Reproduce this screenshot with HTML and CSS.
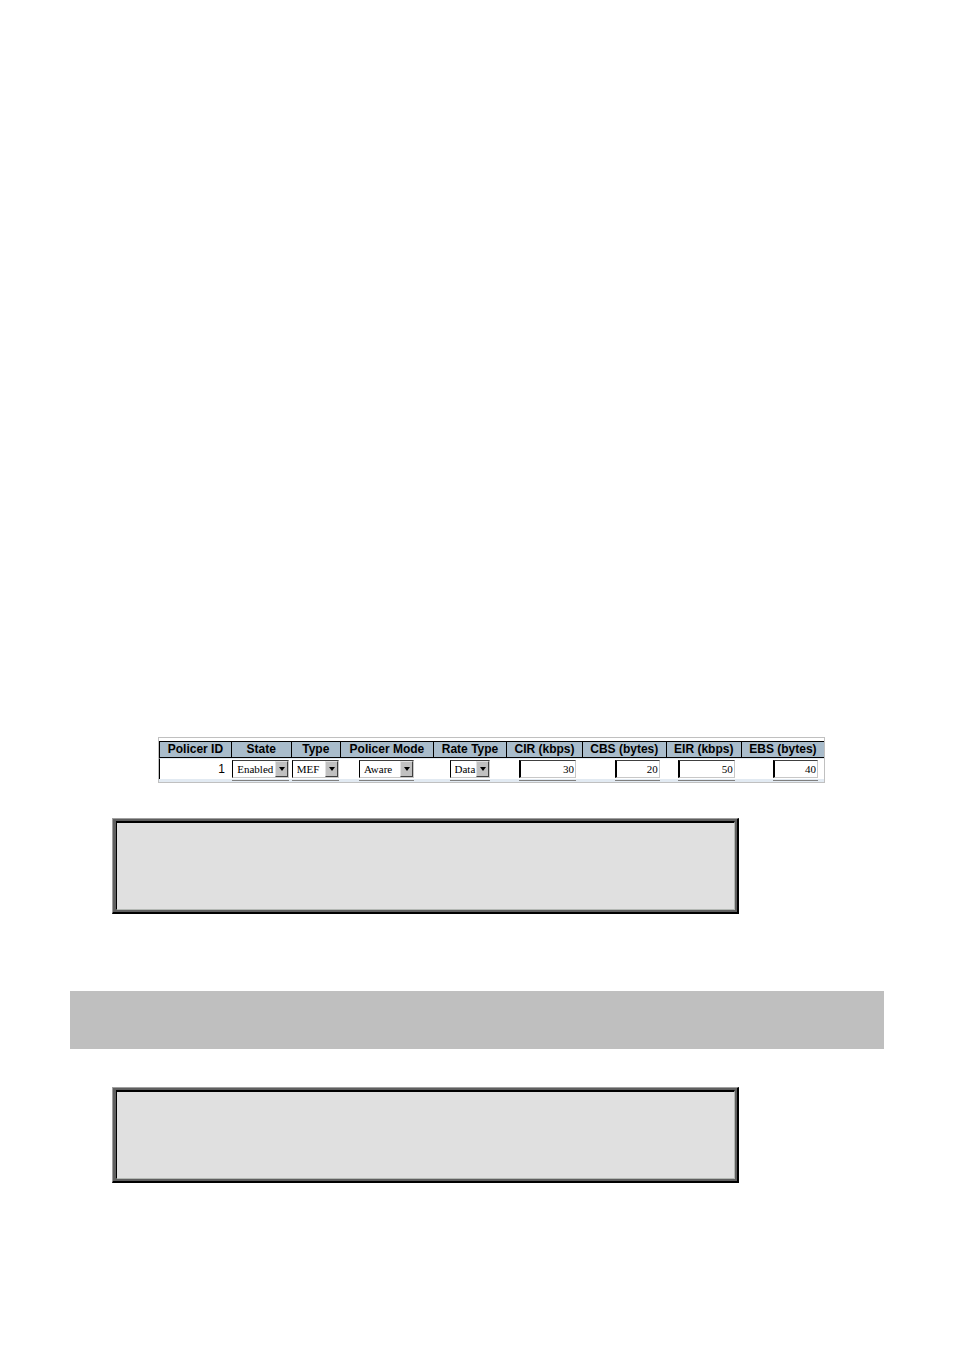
FILE: index.html
```
<!DOCTYPE html>
<html lang="en">
<head>
    <meta charset="UTF-8">
    <meta name="viewport" content="width=device-width, initial-scale=1.0">
    <title>Policer</title>
    <link rel="stylesheet" href="styles.css">
</head>
<body>
    <div class="figure">
        <table class="policer">
            <colgroup>
                <col class="col-id">
                <col class="col-state">
                <col class="col-type">
                <col class="col-mode">
                <col class="col-rate">
                <col class="col-cir">
                <col class="col-cbs">
                <col class="col-eir">
                <col class="col-ebs">
            </colgroup>
            <thead>
                <tr>
                    <th>Policer ID</th>
                    <th>State</th>
                    <th>Type</th>
                    <th>Policer Mode</th>
                    <th>Rate Type</th>
                    <th>CIR (kbps)</th>
                    <th>CBS (bytes)</th>
                    <th>EIR (kbps)</th>
                    <th>EBS (bytes)</th>
                </tr>
            </thead>
            <tbody>
                <tr class="entry">
                    <td class="id">1</td>
                    <td><span class="select w-state"><select aria-label="State"><option>Enabled</option><option>Disabled</option></select></span></td>
                    <td><span class="select w-type"><select aria-label="Type"><option>MEF</option><option>Single</option></select></span></td>
                    <td><span class="select w-mode"><select aria-label="Policer Mode"><option>Aware</option><option>Blind</option></select></span></td>
                    <td><span class="select w-rate"><select aria-label="Rate Type"><option>Data</option><option>Line</option></select></span></td>
                    <td class="num"><input class="w-kbps" type="text" value="30" aria-label="CIR (kbps)"></td>
                    <td class="num"><input class="w-bytes" type="text" value="20" aria-label="CBS (bytes)"></td>
                    <td class="num"><input class="w-kbps" type="text" value="50" aria-label="EIR (kbps)"></td>
                    <td class="num"><input class="w-bytes" type="text" value="40" aria-label="EBS (bytes)"></td>
                </tr>
                <!-- top edge of the next entry -->
                <tr class="next" aria-hidden="true">
                    <td></td>
                    <td><div class="edge w-state"></div></td>
                    <td><div class="edge w-type"></div></td>
                    <td><div class="edge w-mode"></div></td>
                    <td><div class="edge w-rate"></div></td>
                    <td class="num"><div class="edge w-kbps"></div></td>
                    <td class="num"><div class="edge w-bytes"></div></td>
                    <td class="num"><div class="edge w-kbps"></div></td>
                    <td class="num"><div class="edge w-bytes"></div></td>
                </tr>
            </tbody>
        </table>
    </div>

    <div class="box"><div class="box-inner"></div></div>
    <div class="band"></div>
    <div class="box"><div class="box-inner"></div></div>
</body>
</html>
```
FILE: styles.css
```
*,
*::before,
*::after {
    box-sizing: border-box;
}

body {
    margin: 0;
    padding: 737px 70px 160px;
    background: #fff;
    color: #000;
    font-family: Arial, "Liberation Sans", sans-serif;
}

.figure {
    margin: 0 59px 35px 88px;
    padding-top: 3px;
    border: 1px solid #c0c0c0;
}

.policer {
    width: 100%;
    table-layout: fixed;
    border-collapse: separate;
    border-spacing: 0;
    font-size: 12px;
}

.col-id { width: 10.8%; }
.col-state { width: 9%; }
.col-type { width: 7.4%; }
.col-mode { width: 14%; }
.col-rate { width: 11%; }
.col-cir { width: 11.4%; }
.col-cbs { width: 12.6%; }
.col-eir { width: 11.3%; }
.col-ebs { width: 12.5%; }

.policer th {
    height: 17px;
    padding: 0;
    background: #a9bccb;
    border: 1px solid #000;
    border-width: 1px 0 1px 1px;
    line-height: 15px;
    white-space: nowrap;
}

.policer td {
    padding: 0;
    text-align: center;
    vertical-align: top;
}

.policer .entry td {
    height: 21px;
    padding-top: 1px;
    border-top: 1px solid #e2eaf2;
}

.policer .id {
    padding-right: 6px;
    border-left: 1px solid #000;
    line-height: 19px;
    text-align: right;
}

.policer .num {
    padding-right: 6px;
    text-align: right;
}

.select {
    display: block;
    position: relative;
    margin: 0 auto;
}

.select select,
.num input {
    display: block;
    width: 100%;
    height: 18px;
    margin: 0;
    border: 1px solid #404040;
    border-color: #404040 #c8c8c8 #c8c8c8 #000;
    border-radius: 0;
    background: #fff;
    color: #000;
    font: 11px/16px "Liberation Serif", serif;
}

.select select {
    padding: 0 0 0 4px;
    appearance: none;
}

.num input {
    margin-left: auto;
    padding: 0 1px 0 0;
    border-left-width: 2px;
    text-align: right;
}

/* drop-down button */
.select::before {
    content: "";
    position: absolute;
    top: 1px;
    right: 1px;
    width: 13px;
    height: 16px;
    background: #c0c0c0;
    border: 1px solid #e0e0e0;
    border-right-color: #404040;
    border-bottom-color: #404040;
    pointer-events: none;
}

.select::after {
    content: "";
    position: absolute;
    top: 7px;
    right: 4px;
    border: 4px solid transparent;
    border-top-color: #000;
    border-bottom: 0;
    border-left-width: 3px;
    border-right-width: 3px;
    pointer-events: none;
}

.w-state { width: 57px; }
.w-type { width: 47px; }
.w-mode { width: 55px; }
.w-rate { width: 40px; }
.num .w-kbps { width: 57px; }
.num .w-bytes { width: 45px; }

.policer .next td {
    height: 3px;
    padding-top: 1px;
    background: #e2eaf2;
}

.edge {
    height: 1px;
    margin: 0 auto;
    background: #808080;
}

.num .edge {
    margin-right: 0;
}

.box {
    margin: 0 145px 0 42px;
    padding: 2px 2px 2px 3px;
    background: #5f5f5f;
    border: 1px solid #a0a0a0;
    border-right: 2px solid #000;
    border-bottom: 2px solid #000;
}

.box-inner {
    height: 89px;
    background: #e0e0e0;
    border: 1px solid #b4b8b4;
    border-top: 2px solid #000;
    border-left: 1px solid #000;
}

.band {
    height: 58px;
    margin: 77px 0 38px;
    background: #bfbfbf;
}
```
